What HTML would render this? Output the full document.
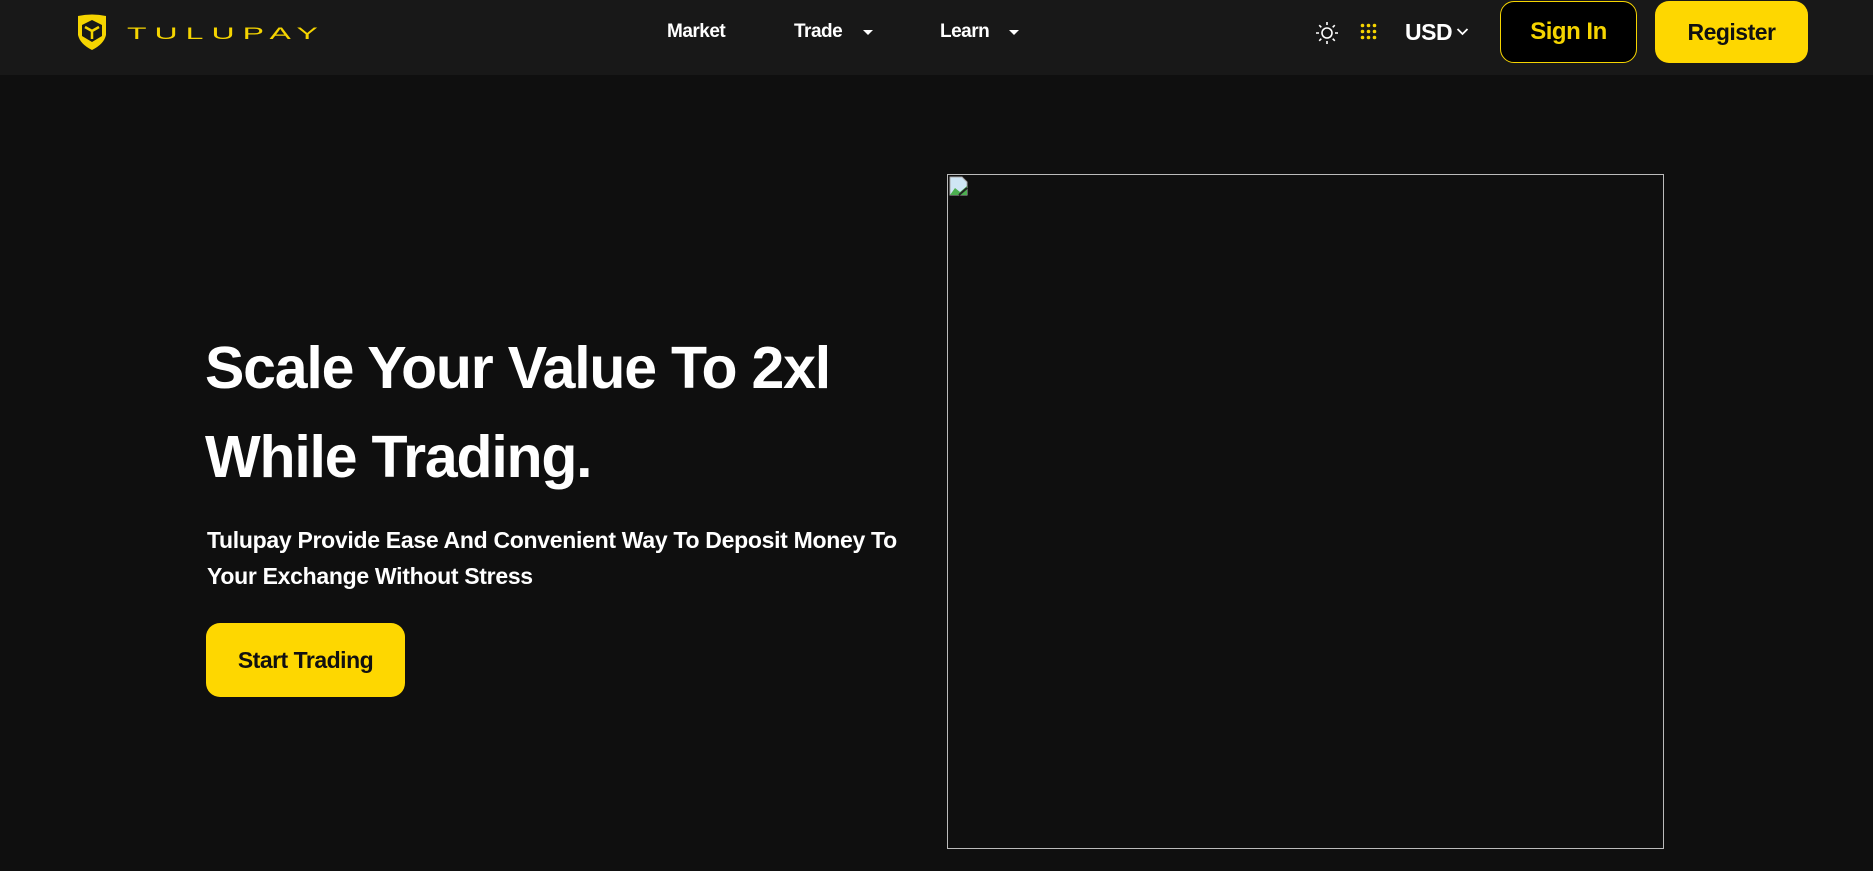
<!DOCTYPE html>
<html><head><meta charset="utf-8"><style>
*{margin:0;padding:0;box-sizing:border-box}
body{width:1873px;height:871px;background:#0f0f0f;font-family:"Liberation Sans",sans-serif;color:#fff;overflow:hidden;position:relative}
.hdr{position:absolute;left:0;top:0;width:1873px;height:75px;background:#181818}
.a{position:absolute;white-space:nowrap}
.nav{font-size:19px;font-weight:bold;top:21px;letter-spacing:-0.5px}
.caret{width:0;height:0;border-left:5px solid transparent;border-right:5px solid transparent;border-top:5px solid #fff;top:30px}
.btn{position:absolute;border-radius:14px;font-weight:bold;font-size:23px;display:flex;align-items:center;justify-content:center;letter-spacing:-0.5px}
h1{position:absolute;left:205px;top:324px;font-size:59px;line-height:89px;font-weight:bold;letter-spacing:-1.2px}
p{position:absolute;left:207px;top:522px;font-size:23px;line-height:36px;font-weight:bold;letter-spacing:-0.3px;width:715px}
</style></head><body>
<div class="hdr">
<svg class="a" style="left:76px;top:13px" width="32" height="38" viewBox="0 0 32 38">
<path d="M2 3 Q16 0 30 3 L30 22 Q28 31 16 37 Q4 31 2 22 Z" fill="#f5d400"/>
<path d="M16 7 L26 12 L26 23 L16 29 L6 23 L6 12 Z" fill="#181818"/>
<path d="M9 14 L16 18 L23 14 M16 18 L16 26" stroke="#f5d400" stroke-width="2.5" fill="none"/>
</svg>
<div class="a" style="left:127px;top:23px;font-size:20px;color:#f5d400;letter-spacing:5px;font-weight:normal;transform:scale(1.6,0.85);transform-origin:left center">TULUPAY</div>
<div class="a nav" style="left:667px">Market</div>
<div class="a nav" style="left:794px">Trade</div>
<div class="a caret" style="left:863px"></div>
<div class="a nav" style="left:940px">Learn</div>
<div class="a caret" style="left:1009px"></div>
<svg class="a" style="left:1315px;top:21px" width="24" height="24" viewBox="0 0 24 24" stroke="#fff" stroke-width="1.6" fill="none"><circle cx="12" cy="12" r="5"/><path d="M12 1v3M12 20v3M1 12h3M20 12h3M4.2 4.2l2.1 2.1M17.7 17.7l2.1 2.1M4.2 19.8l2.1-2.1M17.7 6.3l2.1-2.1"/></svg>
<svg class="a" style="left:1360px;top:23px" width="17" height="17" viewBox="0 0 17 17" fill="#f5d400"><circle cx="2.5" cy="2.5" r="1.8"/><circle cx="8.5" cy="2.5" r="1.8"/><circle cx="14.5" cy="2.5" r="1.8"/><circle cx="2.5" cy="8.5" r="1.8"/><circle cx="8.5" cy="8.5" r="1.8"/><circle cx="14.5" cy="8.5" r="1.8"/><circle cx="2.5" cy="14.5" r="1.8"/><circle cx="8.5" cy="14.5" r="1.8"/><circle cx="14.5" cy="14.5" r="1.8"/></svg>
<div class="a" style="left:1405px;top:19px;font-size:23px;font-weight:bold;letter-spacing:-0.5px">USD</div>
<svg class="a" style="left:1456px;top:27px" width="13" height="9" viewBox="0 0 13 9"><path d="M1.5 2l5 5 5-5" stroke="#fff" stroke-width="1.8" fill="none"/></svg>
<div class="btn" style="left:1500px;top:1px;width:137px;height:62px;background:#000;border:1px solid #f5d400;color:#f5d400;font-size:24px">Sign In</div>
<div class="btn" style="left:1655px;top:1px;width:153px;height:62px;background:#fed700;color:#111">Register</div>
</div>
<h1>Scale Your Value To 2xl<br>While Trading.</h1>
<p>Tulupay Provide Ease And Convenient Way To Deposit Money To Your Exchange Without Stress</p>
<div class="btn" style="left:206px;top:623px;width:199px;height:74px;background:#fed700;color:#111;font-size:23px">Start Trading</div>
<div class="a" style="left:947px;top:174px;width:717px;height:675px;border:1px solid #bbb"></div>
<svg class="a" style="left:949px;top:176px" width="20" height="20" viewBox="0 0 20 20"><path d="M1 1h12l5 5v13H1z" fill="#cfe6f5" stroke="#aaa"/><path d="M1 19 L6 12 L11 16 L18 10 V19 Z" fill="#4caf50"/><path d="M10 19 L18 12" stroke="#222" stroke-width="2"/></svg>
</body></html>
